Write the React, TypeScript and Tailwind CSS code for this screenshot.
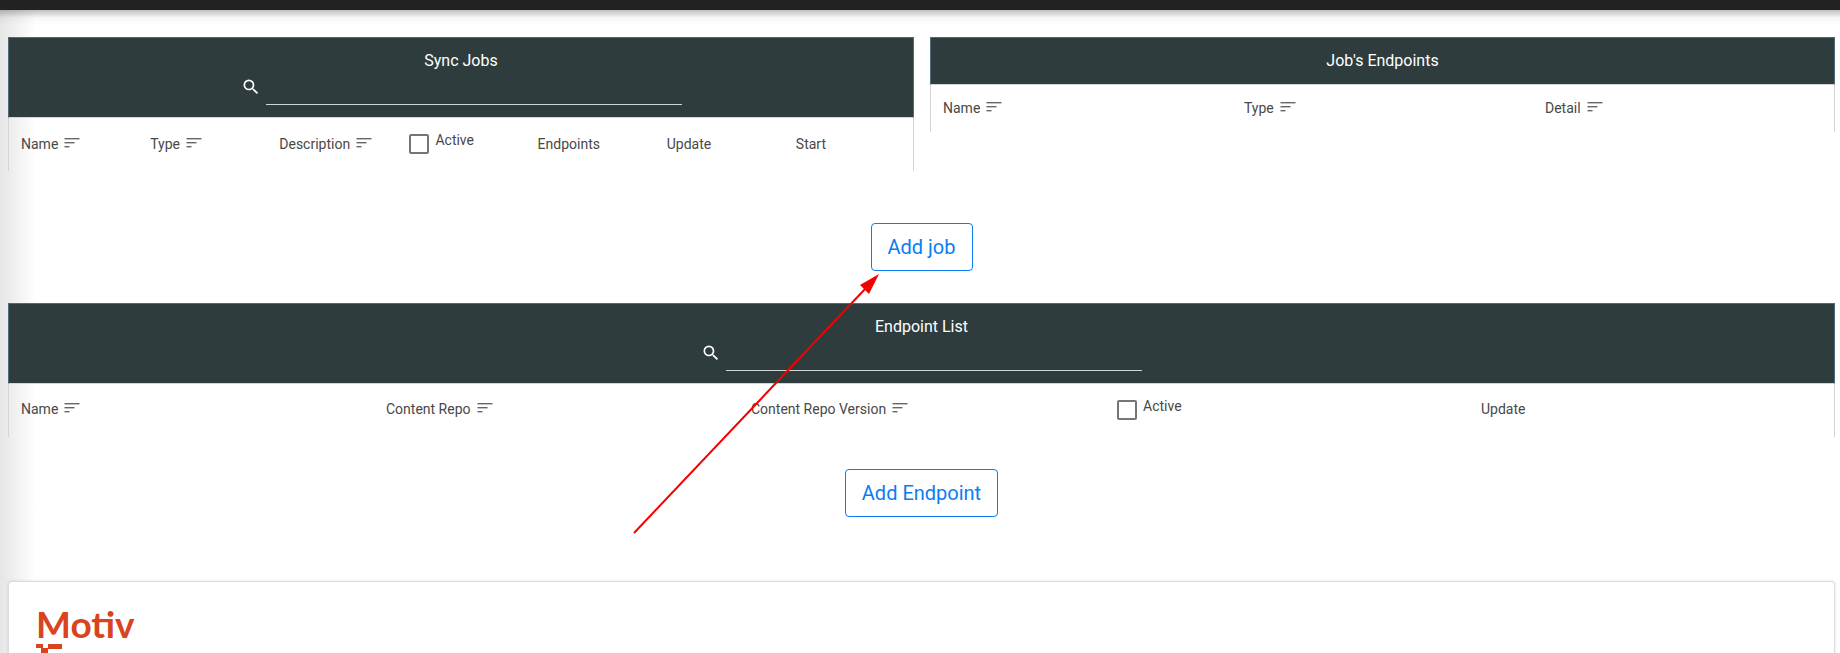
import { MdSearch } from "react-icons/md";

const roboto = "font-['Roboto',sans-serif]";

function SortIcon() {
  return (
    <svg width="16" height="12" viewBox="0 0 16 12" className="ml-[6px] -mt-[3px] shrink-0">
      <rect x="0.5" y="1" width="15" height="1.4" fill="#666" />
      <rect x="0.5" y="5" width="10" height="1.4" fill="#666" />
      <rect x="0.5" y="9" width="5" height="1.4" fill="#666" />
    </svg>
  );
}

type Col = { label: string; sort?: boolean; check?: boolean };

function HeadCell({ col, rowPad }: { col: Col; rowPad: string }) {
  if (col.check) {
    return (
      <div className="flex items-start pl-[13px] pt-[16px]">
        <span className="block w-[20px] h-[20px] rounded-[2px] border-2 border-[#757575] box-border" />
        <span className="ml-[6px] -mt-[4px] text-[14px] leading-[20px] text-[#484848]">{col.label}</span>
      </div>
    );
  }
  return (
    <div className={`flex items-center pl-[12px] h-[20px] ${rowPad} box-content text-[14px] leading-[20px] text-[#484848] whitespace-nowrap`}>
      {col.label}
      {col.sort && <SortIcon />}
    </div>
  );
}

function DataTable({
  title,
  cols,
  gridClass,
  rowPad,
  search,
}: {
  title: string;
  cols: Col[];
  gridClass: string;
  rowPad: string;
  search?: boolean;
}) {
  return (
    <div className="border-x border-[#d4d4d4]">
      <div className={`bg-[#2f3c3e] border border-[#4f6a78] border-b-[#d4d4d4] -mx-px ${search ? "h-[81px]" : "h-[48px]"}`}>
        <div className="text-center text-white text-[16px] leading-[20px] pt-[13px]">{title}</div>
        {search && (
          <div className="flex justify-center mt-[1px]">
            <div className="flex items-center w-[441px]">
              <MdSearch size={20} className="text-white shrink-0 -mt-[4px]" />
              <div className="ml-[5px] flex-1 h-[33px] border-b border-[#cfd4d4]" />
            </div>
          </div>
        )}
      </div>
      <div className={`grid ${gridClass}`}>
        {cols.map((c) => (
          <HeadCell key={c.label} col={c} rowPad={rowPad} />
        ))}
      </div>
    </div>
  );
}

function OutlineButton({ children }: { children: string }) {
  return (
    <button className="h-[48px] px-[16px] rounded-[4px] border border-[#0b7cf2] bg-white text-[#0b7cf2] text-[20px] leading-none">
      {children}
    </button>
  );
}

export default function App() {
  return (
    <div className={`relative w-[1840px] h-[653px] overflow-hidden bg-white ${roboto}`}>
      {/* page shadows */}
      <div className="absolute left-0 top-0 bottom-0 w-[36px] bg-gradient-to-r from-black/10 to-transparent" />
      <div className="absolute left-0 right-0 top-[10px] h-[16px] bg-gradient-to-b from-black/25 via-black/3 to-transparent" />

      <div className="relative h-[10px] bg-[#212322]" />

      <div className="relative pl-[8px] pr-[5px] pt-[27px]">
        <div className="grid grid-cols-[906px_905px] gap-x-[16px]">
          <DataTable
            title="Sync Jobs"
            search
            gridClass="grid-cols-7 h-[53px]"
            rowPad="pt-[16px]"
            cols={[
              { label: "Name", sort: true },
              { label: "Type", sort: true },
              { label: "Description", sort: true },
              { label: "Active", check: true },
              { label: "Endpoints" },
              { label: "Update" },
              { label: "Start" },
            ]}
          />
          <div className="h-[95px]">
            <DataTable
              title="Job's Endpoints"
              gridClass="grid-cols-3 h-[47px]"
              rowPad="pt-[13px]"
              cols={[
                { label: "Name", sort: true },
                { label: "Type", sort: true },
                { label: "Detail", sort: true },
              ]}
            />
          </div>
        </div>

        <div className="flex justify-center pt-[52px] pb-[32px]">
          <OutlineButton>Add job</OutlineButton>
        </div>

        <DataTable
          title="Endpoint List"
          search
          gridClass="grid-cols-5 h-[53px]"
          rowPad="pt-[15px]"
          cols={[
            { label: "Name", sort: true },
            { label: "Content Repo", sort: true },
            { label: "Content Repo Version", sort: true },
            { label: "Active", check: true },
            { label: "Update" },
          ]}
        />

        <div className="flex justify-center pt-[32px] pb-[64px]">
          <OutlineButton>Add Endpoint</OutlineButton>
        </div>

        <div className="h-[90px] rounded-t-[4px] border border-[#dcdcdc] shadow-[0_0_3px_rgba(0,0,0,0.12)] bg-white pl-[27px] pt-[23px]">
          <div className="font-['Lato',sans-serif] font-bold text-[#d9441f] text-[37px] leading-[37px]">Motiv</div>
          <div className="flex mt-[2px]">
            <span className="block w-[7px] h-[4px] bg-[#d9441f]" />
            <span className="block w-[7px] h-[5px] mt-[4px] -ml-[2px] bg-[#d9441f]" />
            <span className="block w-[14px] h-[5px] bg-[#d9441f]" />
          </div>
        </div>
      </div>

      {/* red annotation arrow */}
      <svg className="absolute left-0 top-0 pointer-events-none" width="1840" height="653">
        <line x1="634" y1="533" x2="866" y2="288" stroke="#f40000" strokeWidth="2" />
        <polygon points="879,274 869,294 860,285" fill="#f40000" />
      </svg>
    </div>
  );
}
